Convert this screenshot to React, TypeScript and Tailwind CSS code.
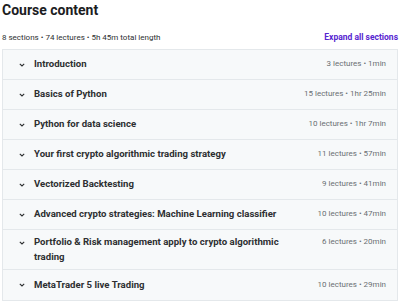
const sections = [
  { title: 'Introduction', meta: '3 lectures • 1min' },
  { title: 'Basics of Python', meta: '15 lectures • 1hr 25min' },
  { title: 'Python for data science', meta: '10 lectures • 1hr 7min' },
  { title: 'Your first crypto algorithmic trading strategy', meta: '11 lectures • 57min' },
  { title: 'Vectorized Backtesting', meta: '9 lectures • 41min' },
  { title: 'Advanced crypto strategies: Machine Learning classifier', meta: '10 lectures • 47min' },
  {
    title: 'Portfolio & Risk management apply to crypto algorithmic trading',
    meta: '6 lectures • 20min',
  },
  { title: 'MetaTrader 5 live Trading', meta: '10 lectures • 29min' },
];

function Chevron() {
  return (
    <svg width="6" height="4" viewBox="0 0 6 4" className="shrink-0 mt-[5.5px]">
      <path d="M0.8 0.8l2.2 2.2 2.2-2.2" fill="none" stroke="#2d2f31" strokeWidth="1.1" />
    </svg>
  );
}

export default function App() {
  return (
    <div
      className="w-[400px] h-[302px] overflow-hidden bg-white text-[#2d2f31]"
      style={{ fontFamily: 'Roboto, "Liberation Sans", sans-serif' }}
    >
      <h2 className="px-[2px] pt-[1px] text-[14px] leading-[18px] font-bold text-[#1c1d1f]">
        Course content
      </h2>
      <div className="flex items-end justify-between px-[2px] mt-[13px] h-[12px]">
        <span className="text-[8px] text-[#2d2f31]">
          8 sections • 74 lectures • 5h 45m total length
        </span>
        <button className="text-[8.5px] font-bold text-[#5624d0]">
          Expand all sections
        </button>
      </div>
      <div className="mx-[2px] mt-[5px] border border-[#e4e8eb]">
        {sections.map(s => (
          <div
            key={s.title}
            className="flex items-center min-h-[30px] bg-[#f7f9fa] border-b border-[#e4e8eb] last:border-b-0 pl-[16px] pr-[11px] py-[5px]"
          >
            <div className="flex flex-1 items-start">
              <Chevron />
              <div className="flex-1 pl-[9px] pr-[26px] text-[9.6px] leading-[14.5px] font-bold">
                {s.title}
              </div>
              <div className="text-[8px] leading-[14.5px] text-[#6a6f73] whitespace-nowrap">
                {s.meta}
              </div>
            </div>
          </div>
        ))}
      </div>
    </div>
  );
}
